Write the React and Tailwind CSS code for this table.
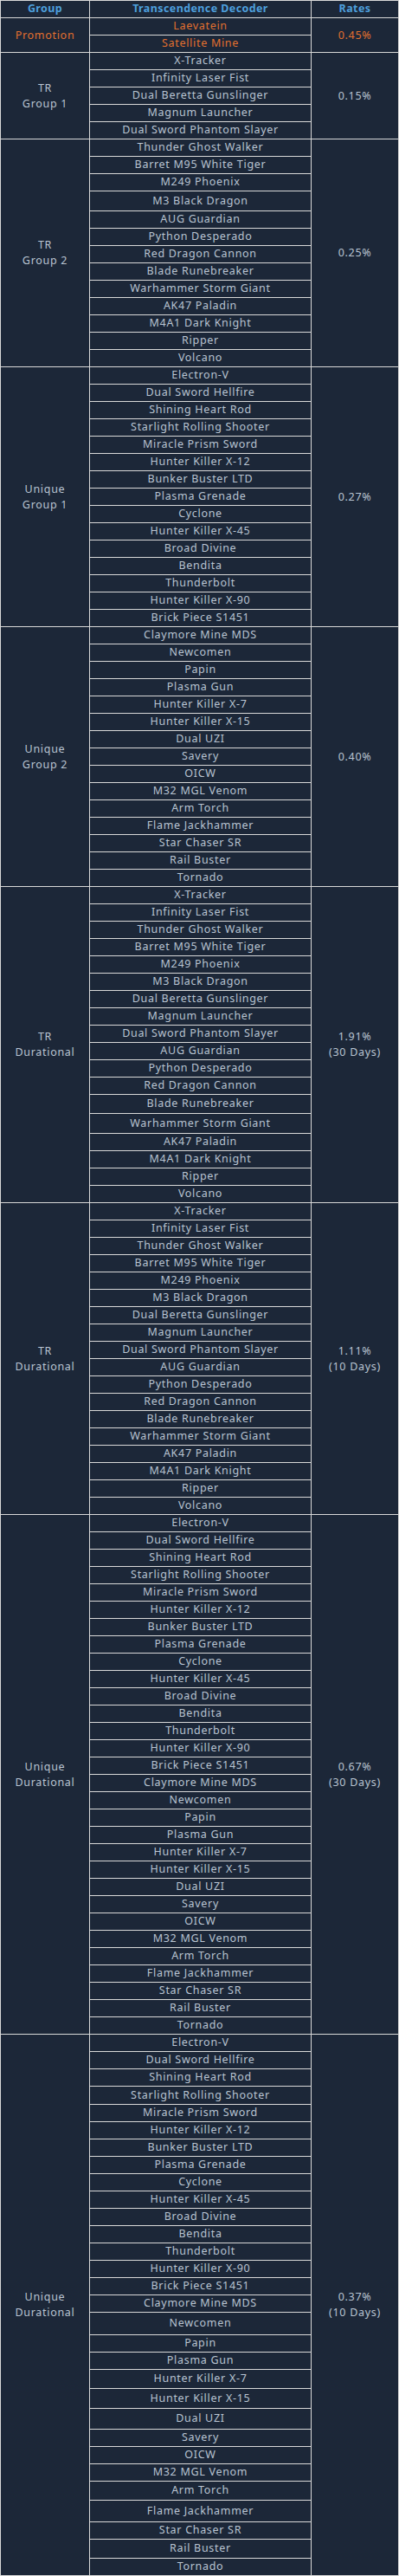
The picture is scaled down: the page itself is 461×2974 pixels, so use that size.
const TR_ALL = [
    'X-Tracker',
    'Infinity Laser Fist',
    'Thunder Ghost Walker',
    'Barret M95 White Tiger',
    'M249 Phoenix',
    'M3 Black Dragon',
    'Dual Beretta Gunslinger',
    'Magnum Launcher',
    'Dual Sword Phantom Slayer',
    'AUG Guardian',
    'Python Desperado',
    'Red Dragon Cannon',
    'Blade Runebreaker',
    'Warhammer Storm Giant',
    'AK47 Paladin',
    'M4A1 Dark Knight',
    'Ripper',
    'Volcano',
];

const UNIQUE_1 = [
    'Electron-V',
    'Dual Sword Hellfire',
    'Shining Heart Rod',
    'Starlight Rolling Shooter',
    'Miracle Prism Sword',
    'Hunter Killer X-12',
    'Bunker Buster LTD',
    'Plasma Grenade',
    'Cyclone',
    'Hunter Killer X-45',
    'Broad Divine',
    'Bendita',
    'Thunderbolt',
    'Hunter Killer X-90',
    'Brick Piece S1451',
];

const UNIQUE_2 = [
    'Claymore Mine MDS',
    'Newcomen',
    'Papin',
    'Plasma Gun',
    'Hunter Killer X-7',
    'Hunter Killer X-15',
    'Dual UZI',
    'Savery',
    'OICW',
    'M32 MGL Venom',
    'Arm Torch',
    'Flame Jackhammer',
    'Star Chaser SR',
    'Rail Buster',
    'Tornado',
];

// row content heights (px) -> class, written out so tailwind picks them up
const H = {
    19: 'h-[19px]',
    20: 'h-[20px]',
    21: 'h-[21px]',
    22: 'h-[22px]',
    23: 'h-[23px]',
    24: 'h-[24px]',
    25: 'h-[25px]',
};

const sections = [
    {
        group: ['Promotion'],
        rate: ['0.45%'],
        promo: true,
        items: ['Laevatein', 'Satellite Mine'],
    },
    {
        group: ['TR', 'Group 1'],
        rate: ['0.15%'],
        items: ['X-Tracker', 'Infinity Laser Fist', 'Dual Beretta Gunslinger', 'Magnum Launcher', 'Dual Sword Phantom Slayer'],
    },
    {
        group: ['TR', 'Group 2'],
        rate: ['0.25%'],
        items: [
            'Thunder Ghost Walker',
            'Barret M95 White Tiger',
            'M249 Phoenix',
            'M3 Black Dragon',
            'AUG Guardian',
            'Python Desperado',
            'Red Dragon Cannon',
            'Blade Runebreaker',
            'Warhammer Storm Giant',
            'AK47 Paladin',
            'M4A1 Dark Knight',
            'Ripper',
            'Volcano',
        ],
        tall: { 'M3 Black Dragon': 22 },
    },
    { group: ['Unique', 'Group 1'], rate: ['0.27%'], items: UNIQUE_1 },
    { group: ['Unique', 'Group 2'], rate: ['0.40%'], items: UNIQUE_2 },
    {
        group: ['TR', 'Durational'],
        rate: ['1.91%', '(30 Days)'],
        items: TR_ALL,
        tall: { 'Blade Runebreaker': 21, 'Warhammer Storm Giant': 22 },
    },
    { group: ['TR', 'Durational'], rate: ['1.11%', '(10 Days)'], items: TR_ALL },
    { group: ['Unique', 'Durational'], rate: ['0.67%', '(30 Days)'], items: [...UNIQUE_1, ...UNIQUE_2] },
    {
        group: ['Unique', 'Durational'],
        rate: ['0.37%', '(10 Days)'],
        items: [...UNIQUE_1, ...UNIQUE_2],
        tall: {
            'Starlight Rolling Shooter': 20,
            Newcomen: 25,
            'Hunter Killer X-7': 21,
            'Hunter Killer X-15': 22,
            'Dual UZI': 23,
            'Arm Torch': 21,
            'Flame Jackhammer': 24,
            'Rail Buster': 21,
        },
    },
];

function Lines({ lines }) {
    return (
        <div className="text-center leading-[18px]">
            {lines.map((l, i) => (
                <div key={i}>{l}</div>
            ))}
        </div>
    );
}

export default function App() {
    return (
        <div className="w-[461px] border border-[#d8d8d8] bg-[#1c2738] text-[12.5px] tracking-[0.7px] text-[#b9c4d2] font-['Noto_Sans',sans-serif]">
            {/* Header */}
            <div className="flex h-[19px] font-bold tracking-[0.4px] text-[#4d9fdc]">
                <div className="w-[102px] flex items-center justify-center">Group</div>
                <div className="w-[257px] border-x border-[#d8d8d8] flex items-center justify-center">
                    Transcendence Decoder
                </div>
                <div className="flex-1 flex items-center justify-center">Rates</div>
            </div>

            {sections.map((s, si) => (
                <div
                    key={si}
                    className={`flex border-t border-[#d8d8d8] ${s.promo ? 'text-[#e2702f]' : ''}`}
                >
                    <div className="w-[102px] flex items-center justify-center">
                        <Lines lines={s.group} />
                    </div>
                    <div className="w-[257px] border-x border-[#d8d8d8]">
                        {s.items.map((item, i) => (
                            <div
                                key={i}
                                className={`flex items-center justify-center whitespace-nowrap ${H[(s.tall && s.tall[item]) || 19]} ${i > 0 ? 'border-t border-[#d8d8d8] box-content' : ''}`}
                            >
                                {item}
                            </div>
                        ))}
                    </div>
                    <div className="flex-1 flex items-center justify-center">
                        <Lines lines={s.rate} />
                    </div>
                </div>
            ))}
        </div>
    );
}
